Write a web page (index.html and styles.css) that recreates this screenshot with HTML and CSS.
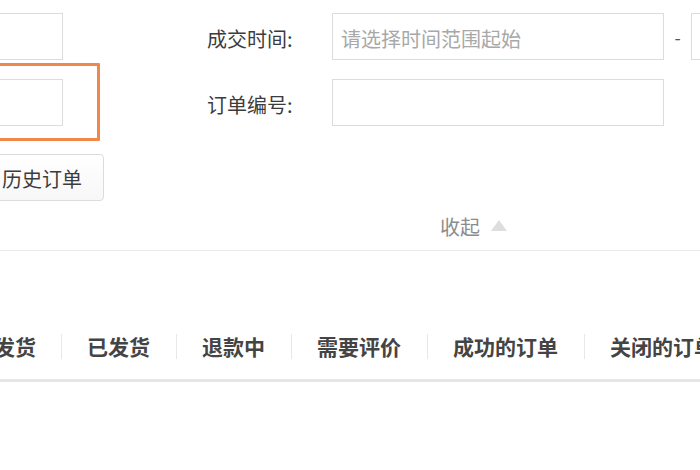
FILE: index.html
```html
<!DOCTYPE html>
<html lang="zh-CN">
<head>
<meta charset="utf-8">
<title>订单搜索</title>
<link rel="stylesheet" href="styles.css">
</head>
<body>
<div class="page">
  <div class="filters">
    <div class="row">
      <div class="input left-input"></div>
      <span class="label">成交时间:</span>
      <div class="input wide"><span class="ph">请选择时间范围起始</span></div>
      <span class="dash">-</span>
      <div class="input wide"><span class="ph">请选择时间范围结束</span></div>
    </div>
    <div class="row">
      <div class="left-wrap">
        <div class="input left-input"></div>
        <div class="highlight"></div>
      </div>
      <span class="label">订单编号:</span>
      <div class="input wide"></div>
    </div>
    <div class="row row-btn">
      <button class="btn">历史订单</button>
    </div>
  </div>
  <div class="toggle-row">
    <span class="toggle">收起<span class="tri"></span></span>
  </div>
  <div class="tabs">
    <span class="tab">待发货</span>
    <span class="tab">已发货</span>
    <span class="tab">退款中</span>
    <span class="tab">需要评价</span>
    <span class="tab">成功的订单</span>
    <span class="tab">关闭的订单</span>
    <span class="tab">三个月前订单</span>
  </div>
</div>
</body>
</html>
```

FILE: styles.css
```css
html, body {
  margin: 0;
  padding: 0;
  background: #ffffff;
}
body {
  width: 700px;
  height: 470px;
  overflow: hidden;
  font-family: "Noto Sans CJK SC", "Noto Sans", sans-serif;
  color: #3c3c3c;
}
.page {
  width: 700px;
  overflow: hidden;
}
.filters {
  display: flex;
  flex-direction: column;
  gap: 19px;
  padding-top: 13px;
}
.row {
  display: flex;
  align-items: center;
  height: 47px;
  white-space: nowrap;
}
.row-btn {
  margin-top: 9px;
}
.input {
  box-sizing: border-box;
  height: 47px;
  border: 1px solid #dcdcdc;
  background: #fff;
  display: flex;
  align-items: center;
  padding: 3px 0 0 8px;
  flex: none;
}
.left-input {
  width: 120px;
  margin-left: -57px;
}
.left-wrap {
  position: relative;
  display: flex;
}
.highlight {
  position: absolute;
  top: -16px;
  bottom: -15px;
  right: -37px;
  left: -80px;
  border: 3px solid #f0884a;
  border-radius: 1px;
}
.label {
  margin-left: 144px;
  width: 125px;
  font-size: 20px;
  padding-top: 4px;
  color: #3c3c3c;
  flex: none;
}
.wide {
  width: 332px;
}
.ph {
  font-size: 20px;
  color: #a8a8a8;
}
.dash {
  width: 27px;
  text-align: center;
  font-size: 18px;
  color: #555;
  flex: none;
}
.btn {
  box-sizing: border-box;
  height: 47px;
  width: 154px;
  margin-left: -50px;
  border: 1px solid #dcdcdc;
  border-radius: 4px;
  background: linear-gradient(#ffffff, #f7f7f7);
  font-family: inherit;
  font-size: 20px;
  color: #3c3c3c;
  text-align: right;
  padding: 2px 21px 0 0;
}
.toggle-row {
  box-sizing: border-box;
  height: 50px;
  border-bottom: 1px solid #ebebeb;
  padding-left: 440px;
  display: flex;
  align-items: center;
}
.toggle {
  font-size: 20px;
  color: #8c8c8c;
  display: flex;
  align-items: center;
  padding-top: 2px;
}
.tri {
  width: 0;
  height: 0;
  border-left: 8px solid transparent;
  border-right: 8px solid transparent;
  border-bottom: 11px solid #dedede;
  margin-left: 11px;
  margin-bottom: 2px;
}
.tabs {
  display: flex;
  white-space: nowrap;
  margin-left: -52px;
  padding: 83px 0 20px;
  border-bottom: 3px solid #e6e6e6;
}
.tab {
  flex: none;
  font-size: 21px;
  font-weight: 700;
  line-height: 25px;
  color: #444;
  padding: 0 26px 0 25px;
  border-left: 1px solid #e8e8e8;
}
.tab:first-child {
  border-left: none;
  padding-right: 25px;
}
```
